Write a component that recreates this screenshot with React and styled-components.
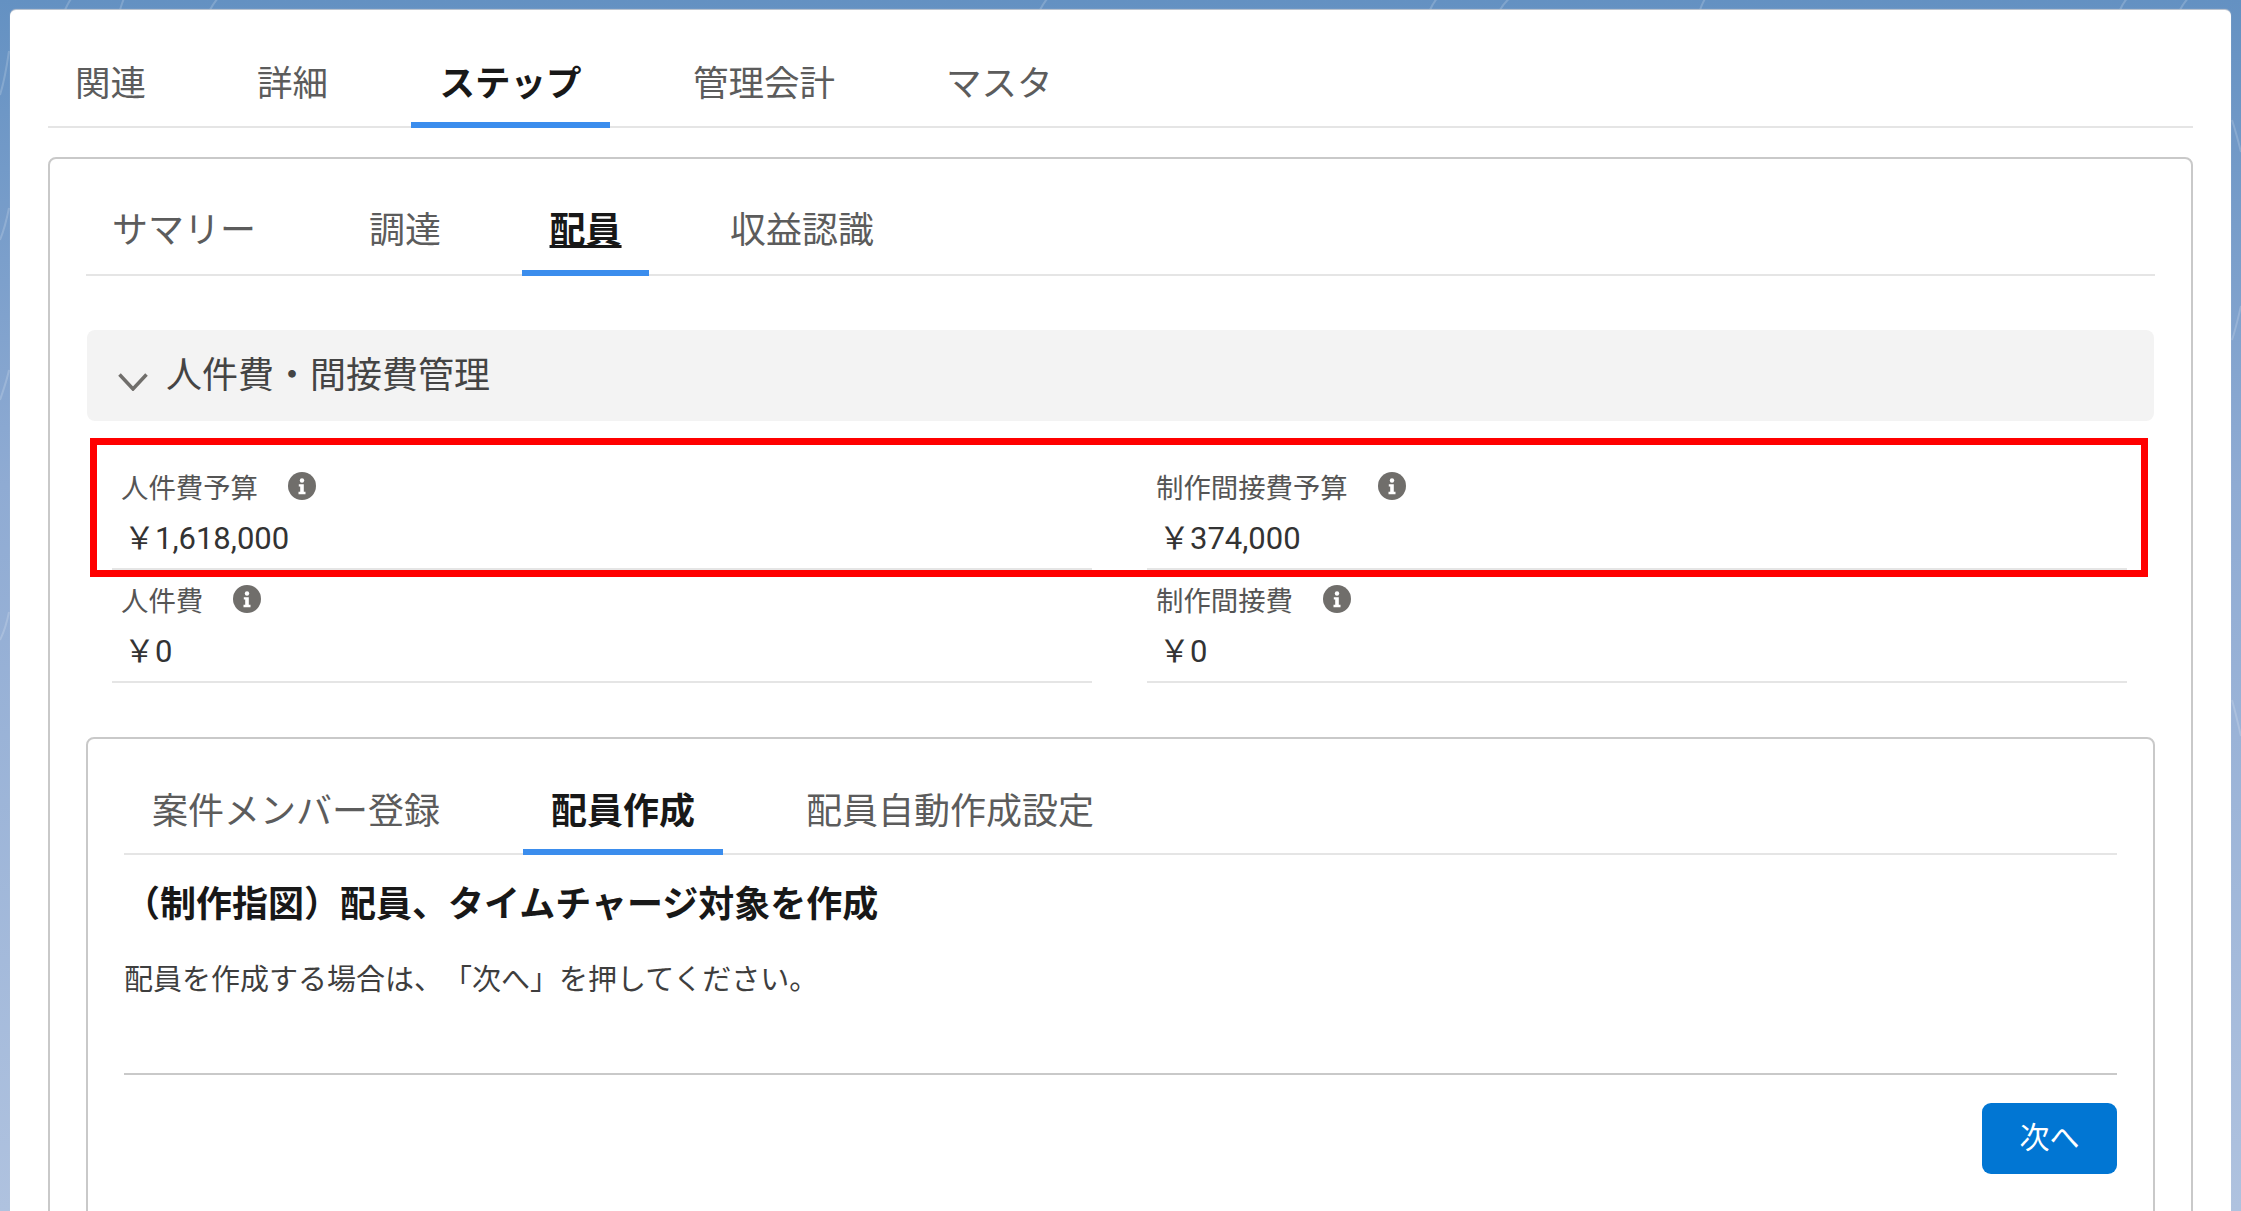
import React from 'react'
import styled, { createGlobalStyle } from 'styled-components'

const GlobalStyle = createGlobalStyle`
    html, body {
        margin: 0;
        padding: 0;
        height: 100%;
        overflow: hidden;
    }
    body {
        font-family: Roboto, 'Noto Sans CJK JP', sans-serif;
        color: #444;
        text-spacing-trim: space-all;
    }
`

const Page = styled.div`
    position: relative;
    height: 1211px;
    padding: 10px 10px 0;
    box-sizing: border-box;
    overflow: hidden;
    background: linear-gradient(180deg, #6491c2 0%, #8fabd3 40%, #afc2df 100%);
`

const Wallpaper = styled.svg`
    position: absolute;
    top: 0;
    left: 0;
    width: 100%;
    height: 100%;
`

const Card = styled.div`
    position: relative;
    height: 100%;
    padding: 0 38px;
    background: #fff;
    border-radius: 6px 6px 0 0;
    box-shadow: 0 -1px 1px #c4c9d1;
`

const TabBar = styled.div`
    display: flex;
    gap: 55px;
    height: ${(p) => p.$height}px;
    padding-top: 30px;
    box-sizing: border-box;
    border-bottom: 2px solid #e5e5e5;
    font-size: ${(p) => p.$size || 36}px;
    --tab-drop: ${(p) => p.$drop}px;
`

const Tab = styled.div`
    display: flex;
    align-items: center;
    height: calc(100% + 2px);
    margin-left: ${(p) => p.$shift || 0}px;
    padding: 0 ${(p) => (p.$pad || 28) + (p.$extra || 0)}px var(--tab-drop) ${(p) => p.$pad || 28}px;
    box-sizing: border-box;
    line-height: 44px;
    white-space: nowrap;
    color: ${(p) => (p.$active ? '#181818' : '#5c5c5c')};
    font-weight: ${(p) => (p.$active ? 700 : 400)};
    text-decoration: ${(p) => (p.$underline ? 'underline' : 'none')};
    box-shadow: ${(p) => (p.$active ? 'inset 0 -6px 0 #3b8ded' : 'none')};
`

const Box = styled.div`
    margin-top: ${(p) => p.$top}px;
    padding: 0 36px 60px;
    border: 2px solid #c9c9c9;
    border-radius: 8px;
`

const Accordion = styled.div`
    display: flex;
    align-items: center;
    gap: 18px;
    height: 91px;
    margin: 54px 1px 0;
    padding: 0 0 8px 31px;
    box-sizing: border-box;
    border-radius: 8px;
    background: #f3f3f3;
    font-size: 36px;
    color: #444;
    svg {
        margin-top: 20px;
    }
`

const Fields = styled.div`
    display: grid;
    grid-template-columns: 1fr 1fr;
    column-gap: 55px;
    margin-top: 36px;
    padding: 0 28px 0 26px;
`

const Field = styled.div`
    height: 113px;
    padding: 12px 0 0 9px;
    box-sizing: border-box;
    border-bottom: 2px solid #e5e5e5;
`

const Label = styled.div`
    display: flex;
    align-items: center;
    gap: 30px;
    height: 34px;
    font-size: 27.4px;
    color: #555;
`

const Value = styled.div`
    margin-top: 19px;
    padding-left: 3px;
    line-height: 34px;
    font-size: 31px;
    color: #333;
`

const Heading = styled.div`
    margin-top: 28px;
    font-size: 36px;
    line-height: 44px;
    font-weight: 700;
    color: #181818;
`

const Body = styled.div`
    margin-top: 33px;
    font-size: 29px;
    line-height: 40px;
    color: #3e3e3e;
`

const Divider = styled.div`
    margin-top: 73px;
    border-top: 2px solid #c9c9c9;
`

const Footer = styled.div`
    display: flex;
    justify-content: flex-end;
    margin-top: 28px;
`

const Button = styled.button`
    width: 135px;
    height: 71px;
    padding: 0 0 8px;
    border: 0;
    border-radius: 9px;
    background: #0176d3;
    color: #fff;
    font-family: inherit;
    font-size: 30px;
`

const RedFrame = styled.div`
    position: absolute;
    left: 90px;
    top: 438px;
    width: 2058px;
    height: 139px;
    box-sizing: border-box;
    border: 7px solid #ff0000;
`

const InfoIcon = () => (
    <svg width="28" height="28" viewBox="0 0 28 28">
        <circle cx="14" cy="14" r="14" fill="#706e6b" />
        <circle cx="14" cy="8.5" r="2.2" fill="#fff" />
        <path d="M10.8 12.2h5v7.6h1.7v2.4h-7v-2.4h1.7v-5.2h-1.4z" fill="#fff" />
    </svg>
)

const Chevron = () => (
    <svg width="30" height="18" viewBox="0 0 30 18" fill="none">
        <path d="M1.5 1.5 15 16 28.5 1.5" stroke="#706e6b" strokeWidth="3.5" />
    </svg>
)

const fields = [
    { label: '人件費予算', value: '￥1,618,000' },
    { label: '制作間接費予算', value: '￥374,000' },
    { label: '人件費', value: '￥0' },
    { label: '制作間接費', value: '￥0' },
]

const App = () => (
    <Page>
        <GlobalStyle />
        <Wallpaper viewBox="0 0 2241 1211" fill="none" stroke="#fff" strokeOpacity="0.18" strokeWidth="2">
            <path d="M65 10C72-6 80-14 90-20M120 10c4-14 8-22 14-30M210 10c8-16 20-24 34-30M1040 10c6-12 14-20 24-26M1430 10c6-14 16-22 28-28M1500 10c8-14 22-22 38-26M1700 10c4-12 10-20 18-26M2120 10c6-14 16-22 30-26M2180 10c6-12 14-18 24-24" />
            <path d="M0 95c5-16 7-30 9-44M0 240c4-10 7-22 9-32M0 400c4-12 7-20 9-30M0 640c5-10 7-18 9-28M2232 120c4 12 6 20 9 32M2232 340c4-12 6-22 9-34M2232 700c4 14 6 24 9 36" />
        </Wallpaper>
        <Card>
            <TabBar $height={118} $size={35.5} $drop={0}>
                <Tab $shift={-1}>関連</Tab>
                <Tab>詳細</Tab>
                <Tab $active $pad={28.5}>ステップ</Tab>
                <Tab>管理会計</Tab>
                <Tab>マスタ</Tab>
            </TabBar>
            <Box $top={29}>
                <TabBar $height={117} $drop={3}>
                    <Tab $pad={26} $extra={6}>サマリー</Tab>
                    <Tab $pad={26}>調達</Tab>
                    <Tab $pad={27.5} $active $underline>配員</Tab>
                    <Tab $pad={26}>収益認識</Tab>
                </TabBar>
                <Accordion>
                    <Chevron />
                    人件費・間接費管理
                </Accordion>
                <Fields>
                    {fields.map((f) => (
                        <Field key={f.label}>
                            <Label>
                                {f.label}
                                <InfoIcon />
                            </Label>
                            <Value>{f.value}</Value>
                        </Field>
                    ))}
                </Fields>
                <Box $top={54}>
                    <TabBar $height={116} $drop={1}>
                        <Tab>案件メンバー登録</Tab>
                        <Tab $active>配員作成</Tab>
                        <Tab>配員自動作成設定</Tab>
                    </TabBar>
                    <Heading>（制作指図）配員、タイムチャージ対象を作成</Heading>
                    <Body>配員を作成する場合は、「次へ」を押してください。</Body>
                    <Divider />
                    <Footer>
                        <Button>次へ</Button>
                    </Footer>
                </Box>
            </Box>
        </Card>
        <RedFrame />
    </Page>
)

export default App
